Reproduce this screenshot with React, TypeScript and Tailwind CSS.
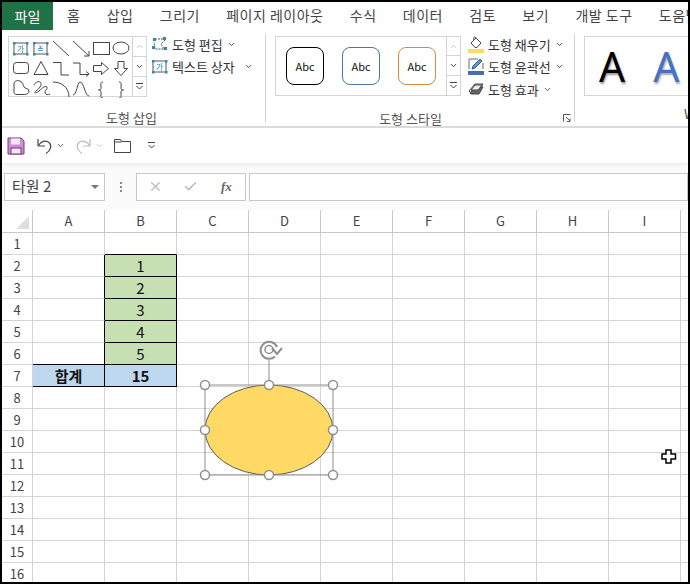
import { ChevronDown, ChevronUp, Check, X } from 'lucide-react';

const KR = "font-['Noto_Sans_CJK_KR','Noto_Sans',sans-serif]";

const tabs = ['홈', '삽입', '그리기', '페이지 레이아웃', '수식', '데이터', '검토', '보기', '개발 도구', '도움말'];
const columns = ['A', 'B', 'C', 'D', 'E', 'F', 'G', 'H', 'I', 'J'];
const rows = Array.from({ length: 16 }, (_, i) => i + 1);

function Caret({ className = '' }: { className?: string }) {
  return <ChevronDown size={9} strokeWidth={2.5} className={`text-[#444] ${className}`} />;
}

function MoreIcon() {
  return (
    <svg width="9" height="9" viewBox="0 0 9 9" fill="none" stroke="#444" strokeWidth="1">
      <path d="M1 1.5h7" />
      <path d="M1.5 4l3 3 3-3" />
    </svg>
  );
}

function ScrollButtons({ h1, h2, h3 }: { h1: string; h2: string; h3: string }) {
  return (
    <div className="flex flex-col w-[15px]">
      <div className={`${h1} flex items-center justify-center border border-[#d4d4d4]`}>
        <ChevronUp size={9} strokeWidth={2} className="text-[#b5b5b5]" />
      </div>
      <div className={`${h2} flex items-center justify-center border-x border-[#d4d4d4]`}>
        <ChevronDown size={9} strokeWidth={2.5} className="text-[#333]" />
      </div>
      <div className={`${h3} flex items-center justify-center border border-[#d4d4d4]`}>
        <MoreIcon />
      </div>
    </div>
  );
}

function TextBoxIcon({ x, y, vertical }: { x: number; y: number; vertical?: boolean }) {
  return (
    <g>
      <rect x={x} y={y} width="13" height="11" fill="none" stroke="#555" strokeWidth="1" />
      {[[x, y], [x + 13, y], [x, y + 11], [x + 13, y + 11]].map(([cx, cy], i) => (
        <rect key={i} x={cx - 1} y={cy - 1} width="2.5" height="2.5" fill="#2f86b8" stroke="none" />
      ))}
      <text x={x + 6.5} y={y + 9} textAnchor="middle" fontSize="8" fill="#2a86b5" stroke="none" fontFamily="Noto Sans CJK KR">
        {vertical ? '≚' : '가'}
      </text>
    </g>
  );
}

function ShapesGallery() {
  return (
    <svg width="123" height="61" viewBox="8 36 123 61" fill="none" stroke="#444" strokeWidth="1">
      <TextBoxIcon x={13} y={42} />
      <TextBoxIcon x={33} y={42} vertical />
      <path d="M52 40l16 15" />
      <path d="M72 40l16 15M88 50v5h-5" />
      <rect x="92.5" y="41.5" width="16" height="12" />
      <ellipse cx="120" cy="47" rx="8" ry="6" />
      <rect x="12.5" y="61.5" width="15" height="11" rx="3" />
      <path d="M40 60.5l-7 13h14z" />
      <path d="M52 61.5h8v12.5h8" />
      <path d="M72 62h7v11.5h9M85 70.5l3 2.5-3 2.5" />
      <path d="M92.5 64.5h8v-3l7 6-7 6v-3h-8z" />
      <path d="M117 60.5h6v7h3.5l-6.5 7-6.5-7h3.5z" />
      <path d="M13 83c0-3 3-4 6-3 3 1 3 4 4 6 1 2 5 1 5 4 0 3-3 3.5-6 3.5h-6c-2.5 0-3-1-3-3z" />
      <path d="M33 84c2-4 6-4 7-2s-2 6-5 8 0 3 3 0 7-6 8-4-3 4-2 6 3 2 5 1" />
      <path d="M52 81c8 0 16 5 16 15" />
      <path d="M72 94C76 94 76 81 79 81C83 81 84 95 88 95" />
      <path d="M102 81c-3 0-2 2-2 5s0 2-2.5 3c2.5 1 2.5 0 2.5 3s-1 5 2 5" />
      <path d="M118 81c3 0 2 2 2 5s0 2 2.5 3c-2.5 1-2.5 0-2.5 3s1 5-2 5" />
    </svg>
  );
}

function EditShapeIcon() {
  return (
    <svg width="16" height="14" viewBox="0 0 16 14" fill="none">
      <path d="M3 2h9M13 3l-4 4 3 5H3L2 5" stroke="#555" strokeDasharray="2 1" />
      {[[0, 9], [11, 0], [12, 10], [1, 1]].map(([x, y], i) => (
        <rect key={i} x={x} y={y} width="3" height="3" fill="#2f86b8" />
      ))}
    </svg>
  );
}

function FillIcon() {
  return (
    <svg width="16" height="17" viewBox="0 0 16 17" fill="none" stroke="#444">
      <path d="M3 7l5-5 5 5-4 4.5H7z" />
      <path d="M8 2c-1-2-3-1-2 2" />
      <rect x="0" y="13" width="16" height="4" fill="#ffd966" stroke="none" />
    </svg>
  );
}

function OutlineIcon() {
  return (
    <svg width="16" height="17" viewBox="0 0 16 17" fill="none">
      <path d="M1 11V1h9M15 5v6" stroke="#666" />
      <path d="M4 11l1-3 7-7 2 2-7 7z" fill="#5b9bd5" stroke="#2f5597" />
      <rect x="0" y="13" width="16" height="4" fill="#4472a8" />
    </svg>
  );
}

function EffectIcon() {
  return (
    <svg width="16" height="14" viewBox="0 0 16 14">
      <path d="M1 9l6-7h8l-5 9H3z" fill="#ddd" stroke="#444" />
      <path d="M2 11l5-6h8l-4 7H3z" fill="#666" stroke="#444" />
      <path d="M7 3h7l-4 5H3z" fill="#eee" stroke="#444" />
    </svg>
  );
}

function RibbonButton({ icon, label, caretGap = 'ml-1' }: { icon: React.ReactNode; label: string; caretGap?: string }) {
  return (
    <div className="flex items-center h-[22.5px]">
      <div className="w-[16px] flex justify-center mr-1">{icon}</div>
      <span className="text-[13px] text-[#333] whitespace-nowrap leading-none">{label}</span>
      <Caret className={caretGap} />
    </div>
  );
}

function DialogLauncher() {
  return (
    <svg width="8" height="8" viewBox="0 0 8 8" fill="none" stroke="#555">
      <path d="M.5 7.5v-7h7" />
      <path d="M3 3l4 4M7 4.5v3H4" />
    </svg>
  );
}

function GroupLabel({ children }: { children: React.ReactNode }) {
  return <div className="text-[13px] text-[#555] leading-none text-center">{children}</div>;
}

function ShapeStyle({ color }: { color: string }) {
  return (
    <div className={`w-[38px] h-[38px] rounded-lg border flex items-center justify-center text-[11px] text-[#111] ${color}`}>
      Abc
    </div>
  );
}

function Ribbon() {
  return (
    <div className="flex h-[96px] shrink-0 border-b-2 border-[#dcdcdc] bg-white">
      {/* 도형 삽입 */}
      <div className="w-[263px] pl-[6px] pt-[4px] relative">
        <div className="flex gap-[5px]">
          <div className="flex">
            <div className="border border-r-0 border-[#d4d4d4] h-[61px]">
              <ShapesGallery />
            </div>
            <ScrollButtons h1="h-[21px]" h2="h-[19px]" h3="h-[21px]" />
          </div>
          <div className="flex flex-col -mt-[3px]">
            <RibbonButton icon={<EditShapeIcon />} label="도형 편집" />
            <RibbonButton
              icon={
                <svg width="16" height="14" viewBox="0 0 16 14" fill="none">
                  <TextBoxIcon x={1} y={1} />
                </svg>
              }
              label="텍스트 상자"
              caretGap="ml-[9px]"
            />
          </div>
        </div>
        <div className="mt-[14px] -ml-[6px] pr-[4px]">
          <GroupLabel>도형 삽입</GroupLabel>
        </div>
      </div>
      <div className="w-px h-[88px] mt-[2px] bg-[#d4d4d4]" />

      {/* 도형 스타일 */}
      <div className="w-[308px] pl-[9px] pt-[4px] relative">
        <div className="flex gap-[7px]">
          <div className="flex">
            <div className="w-[171px] h-[60px] border border-r-0 border-[#d4d4d4] flex items-center gap-[18px] pl-[10px]">
              <ShapeStyle color="border-black" />
              <ShapeStyle color="border-[#4a76a8]" />
              <ShapeStyle color="border-[#d58a42]" />
            </div>
            <ScrollButtons h1="h-[20px]" h2="h-[19px]" h3="h-[21px]" />
          </div>
          <div className="flex flex-col -mt-[3px]">
            <RibbonButton icon={<FillIcon />} label="도형 채우기" />
            <RibbonButton icon={<OutlineIcon />} label="도형 윤곽선" />
            <RibbonButton icon={<EffectIcon />} label="도형 효과" />
          </div>
        </div>
        <div className="mt-[11px] pr-[28px]">
          <GroupLabel>도형 스타일</GroupLabel>
        </div>
        <div className="absolute right-[3px] bottom-[4px] flex">
          <DialogLauncher />
        </div>
      </div>
      <div className="w-px h-[88px] mt-[2px] bg-[#d4d4d4]" />

      {/* WordArt */}
      <div className="flex-1 pl-[9px] pt-[4px] overflow-hidden">
        <div className="h-[60px] w-[140px] border border-[#d4d4d4] flex items-center font-['Noto_Sans',sans-serif] text-[41px] leading-none">
          <span className="ml-[14px] text-black [text-shadow:1px_2px_2px_#999]">A</span>
          <span className="ml-[28px] text-[#4472c4] [text-shadow:1px_2px_2px_#aaa]">A</span>
        </div>
        <div className="text-[13px] text-[#555] leading-none mt-[11px] ml-[100px]">W</div>
      </div>
    </div>
  );
}

function QuickAccess() {
  return (
    <div className="h-[35px] shrink-0 flex items-center bg-white shadow-[0_2px_4px_rgba(0,0,0,0.06)] relative pl-[5px]">
      <svg width="18" height="18" viewBox="0 0 18 18">
        <path d="M1 1h13l3 3v13H1z" fill="#d38bd8" stroke="#6b3f72" strokeWidth="1" />
        <rect x="4" y="1.5" width="9" height="6" fill="#f6e6f7" />
        <rect x="4" y="11" width="10" height="6" fill="#f6e6f7" stroke="#6b3f72" strokeWidth="1" />
      </svg>
      <svg width="18" height="18" viewBox="0 0 18 18" fill="none" stroke="#444" className="ml-[12px]">
        <path d="M1 9V2M1 9h7" strokeWidth="1.2" />
        <path d="M1.5 8.5C4 4 9 3 12 5.5s2 8-3 11" strokeWidth="1.2" />
      </svg>
      <Caret className="ml-[1px]" />
      <svg width="18" height="18" viewBox="0 0 18 18" fill="none" stroke="#bbb" className="ml-[8px]">
        <path d="M17 9V2M17 9h-7" strokeWidth="1.2" />
        <path d="M16.5 8.5C14 4 9 3 6 5.5s-2 8 3 11" strokeWidth="1.2" />
      </svg>
      <ChevronDown size={9} strokeWidth={2} className="text-[#bbb] ml-[4px]" />
      <svg width="17" height="15" viewBox="0 0 17 15" fill="none" stroke="#444" className="ml-[10px]">
        <path d="M.5 14.5V1.5h6l1 2h9v11z" />
        <path d="M.5 4h7" />
      </svg>
      <div className="ml-[16px]">
        <MoreIcon />
      </div>
    </div>
  );
}

function FormulaBar() {
  return (
    <div className="h-[47px] shrink-0 bg-[#fbfbfb] flex items-center pl-[2px] gap-0">
      <div className="w-[101px] h-[28px] bg-white border border-[#c8c8c8] flex items-center justify-between pl-[7px] pr-[5px] text-[15px] text-[#444]">
        <span>타원 2</span>
        <span className="w-0 h-0 border-x-[4px] border-x-transparent border-t-[4px] border-t-[#777]" />
      </div>
      <div className="w-[31px] flex flex-col items-center gap-[2px]">
        <div className="w-[2px] h-[2px] bg-[#888]" />
        <div className="w-[2px] h-[2px] bg-[#888]" />
        <div className="w-[2px] h-[2px] bg-[#888]" />
      </div>
      <div className="w-[110px] h-[28px] bg-white border border-[#c8c8c8] flex items-center pl-[11px]">
        <X size={15} strokeWidth={2} className="text-[#bbb]" />
        <Check size={15} strokeWidth={2.5} className="text-[#bbb] ml-[20px]" />
        <span className="ml-[23px] text-[13px] italic font-bold text-[#666] font-['Liberation_Serif',serif]">fx</span>
      </div>
      <div className="ml-[3px] flex-1 h-[28px] bg-white border border-[#c8c8c8]" />
    </div>
  );
}

function cellClass(col: string, row: number) {
  if (col === 'B' && row >= 2 && row <= 6) return 'bg-[#c6e0b4] border-black';
  if (col === 'B' && row === 7) return 'bg-[#bdd7ee] border-black font-bold';
  if (col === 'A' && row === 7) return 'bg-[#bdd7ee] border-black font-bold';
  if (col === 'B' && row === 1) return 'border-r-[#d4d4d4] border-b-black';
  if (col === 'A' && row >= 2 && row <= 6) return `border-r-black ${row === 6 ? 'border-b-black' : 'border-b-[#d4d4d4]'}`;
  return 'border-[#d4d4d4]';
}

const cellText: Record<string, string> = {
  B2: '1',
  B3: '2',
  B4: '3',
  B5: '4',
  B6: '5',
  A7: '합계',
  B7: '15',
};

function Sheet() {
  return (
    <div className="flex-1 relative overflow-hidden bg-white">
      <div className="grid grid-cols-[31px_repeat(10,72px)] grid-rows-[23px] auto-rows-[22px]">
        <div className="border-r border-b border-[#c8c8c8] relative">
          <div className="absolute right-[3px] bottom-[3px] w-0 h-0 border-l-[13px] border-l-transparent border-b-[13px] border-b-[#dfdfdf]" />
        </div>
        {columns.map((c) => (
          <div key={c} className="border-r border-b border-[#c8c8c8] flex items-center justify-center text-[13px] text-[#444]">
            {c}
          </div>
        ))}
        {rows.map((r) => (
          <div key={r} className="contents">
            <div className="border-r border-b border-[#d4d4d4] flex items-center justify-center text-[13px] text-[#444]">{r}</div>
            {columns.map((c) => (
              <div
                key={c}
                className={`border-r border-b flex items-center justify-center text-[15px] text-[#111] leading-none pb-[1px] ${cellClass(c, r)}`}
              >
                {cellText[`${c}${r}`]}
              </div>
            ))}
          </div>
        ))}
      </div>

      {/* selected ellipse, lies over the cells */}
      <svg width="150" height="150" viewBox="0 0 150 150" fill="none" className="absolute left-[195px] top-[130px]">
        <ellipse cx="72" cy="90" rx="64" ry="45" fill="#ffd966" stroke="#5a5a5a" strokeWidth="1" />
        <rect x="8" y="45" width="128" height="90" stroke="#8f8f8f" strokeWidth="1" />
        <path d="M72 45V20" stroke="#8f8f8f" />
        <path d="M78 16.500A8.500 8.500 0 1 1 80 7" stroke="#8f8f8f" strokeWidth="2" />
        <circle cx="72" cy="9.500" r="4" stroke="#8f8f8f" strokeWidth="1.5" />
        <path d="M75 8l5 6 5-6" stroke="#8f8f8f" strokeWidth="2" />
        {[
          [8, 45],
          [72, 45],
          [136, 45],
          [8, 90],
          [136, 90],
          [8, 135],
          [72, 135],
          [136, 135],
        ].map(([cx, cy], i) => (
          <circle key={i} cx={cx} cy={cy} r="4.5" fill="white" stroke="#8f8f8f" strokeWidth="1.5" />
        ))}
      </svg>

      {/* mouse pointer */}
      <svg width="16" height="16" viewBox="0 0 16 16" className="absolute left-[659px] top-[239px]">
        <path d="M5 1h5v4h4.500v5H10v4H5v-4H1V5h4z" fill="white" stroke="black" strokeWidth="1.5" />
      </svg>
    </div>
  );
}

export default function App() {
  return (
    <div className={`w-[690px] h-[584px] border-2 border-black bg-white flex flex-col overflow-hidden ${KR}`}>
      <div className="h-[30px] flex items-center bg-white shrink-0">
        <div className="w-[51px] h-[28px] shrink-0 self-start bg-[#1f7246] text-white text-[14px] flex items-center justify-center">파일</div>
        <div className="flex gap-[26.3px] pl-[14px] text-[14px] tracking-[0.5px] text-[#444] whitespace-nowrap -mt-[3px]">
          {tabs.map((t) => (
            <span key={t}>{t}</span>
          ))}
        </div>
      </div>
      <Ribbon />
      <QuickAccess />
      <FormulaBar />
      <Sheet />
    </div>
  );
}
